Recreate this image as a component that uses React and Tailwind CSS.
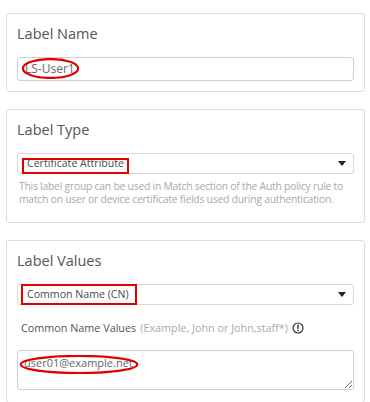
import React from 'react'

const font = { fontFamily: '"Open Sans", "Liberation Sans", sans-serif' }

function Caret() {
  return (
    <svg width="8" height="5" viewBox="0 0 8 5" className="shrink-0">
      <path d="M0 0 H8 L4 5 Z" fill="#222" />
    </svg>
  )
}

function Ellipse({ className }) {
  return (
    <svg className={`absolute pointer-events-none ${className}`} viewBox="0 0 100 40" preserveAspectRatio="none">
      <ellipse cx="50" cy="20" rx="48.5" ry="18" fill="none" stroke="#e00000" strokeWidth="2.2" vectorEffect="non-scaling-stroke" />
    </svg>
  )
}

function Card({ title, children, className = '' }) {
  return (
    <div className={`bg-white border border-[#dedede] rounded-[3px] px-[10px] pt-[10px] ${className}`}>
      <h3 className="text-[14.5px] leading-[20px] text-[#555] mb-[13px]">{title}</h3>
      {children}
    </div>
  )
}

function Select({ value, boxClass }) {
  return (
    <div className="relative h-[21px] border border-[#d8d8d8] rounded-[3px] flex items-center justify-between pl-[9px] pr-[7px]">
      <span className="text-[10.6px] text-[#4a4a4a] leading-none">{value}</span>
      <Caret />
      <div className={`absolute border-2 border-[#e00000] pointer-events-none ${boxClass}`} />
    </div>
  )
}

export default function App() {
  return (
    <div className="bg-white min-h-[402px] pl-[6px] pr-[5px] pt-[13px] flex flex-col gap-[17px]" style={font}>
      <Card title="Label Name" className="pb-[10px]">
        <div className="relative h-[24px] border border-[#cfcfcf] rounded-[3px] flex items-center pl-[7px]">
          <span className="text-[12px] text-[#666]">LS-User1</span>
          <Ellipse className="left-[4px] top-0 w-[57px] h-[21px]" />
        </div>
      </Card>

      <Card title="Label Type" className="pb-[16px]">
        <Select value="Certificate Attribute" boxClass="left-[4px] top-[4px] w-[107px] h-[16px]" />
        <p className="mt-[6px] px-[2px] text-[10.4px] leading-[13px] tracking-[-0.25px] text-[#aaa]">
          This label group can be used in Match section of the Auth policy rule to match on user or device certificate fields used during authentication.
        </p>
      </Card>

      <Card title="Label Values" className="pb-[12px]">
        <Select value="Common Name (CN)" boxClass="left-[3px] top-[-1px] w-[116px] h-[21px]" />
        <div className="mt-[15px] pl-[4px] flex items-center gap-[4px] text-[10.8px] leading-[16px]">
          <span className="text-[#555]">Common Name Values</span>
          <span className="text-[#aaa]">(Example, John or John,staff*)</span>
          <svg width="12" height="12" viewBox="0 0 12 12">
            <circle cx="6" cy="6" r="5" fill="none" stroke="#333" strokeWidth="1.2" />
            <path d="M6 3 V6.6" stroke="#333" strokeWidth="1.4" strokeLinecap="round" />
            <circle cx="6" cy="8.6" r="0.8" fill="#333" />
          </svg>
        </div>
        <div className="relative mt-[14px]">
          <textarea
            defaultValue="user01@example.net"
            className="block w-full h-[40px] border border-[#cfcfcf] rounded-[3px] px-[6px] py-[4px] text-[11px] text-[#666] outline-none resize-y"
            style={font}
          />
          <Ellipse className="left-[2px] top-[5px] w-[120px] h-[19px]" />
        </div>
      </Card>
    </div>
  )
}
